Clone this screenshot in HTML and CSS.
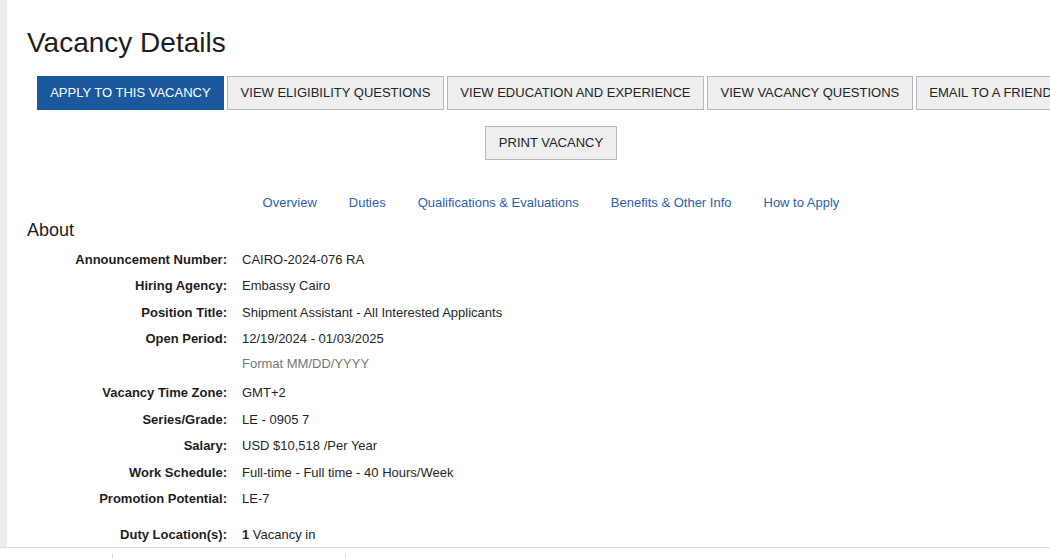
FILE: index.html
```html
<!DOCTYPE html>
<html lang="en">
<head>
<meta charset="utf-8">
<title>Vacancy Details</title>
<link rel="stylesheet" href="styles.css">
</head>
<body>
<div class="page">
  <main class="panel">
    <h1 class="title">Vacancy Details</h1>
    <div class="actions">
      <div class="action-row">
        <button class="btn btn-primary">APPLY TO THIS VACANCY</button>
        <button class="btn">VIEW ELIGIBILITY QUESTIONS</button>
        <button class="btn">VIEW EDUCATION AND EXPERIENCE</button>
        <button class="btn">VIEW VACANCY QUESTIONS</button>
        <button class="btn">EMAIL TO A FRIEND</button>
      </div>
      <div class="action-row">
        <button class="btn">PRINT VACANCY</button>
      </div>
    </div>
    <nav class="tabs">
      <a href="#overview">Overview</a>
      <a href="#duties">Duties</a>
      <a href="#qualifications">Qualifications &amp; Evaluations</a>
      <a href="#benefits">Benefits &amp; Other Info</a>
      <a href="#apply">How to Apply</a>
    </nav>
    <h2 class="section-title">About</h2>
    <dl class="details">
      <div class="row"><dt>Announcement Number:</dt><dd>CAIRO-2024-076 RA</dd></div>
      <div class="row"><dt>Hiring Agency:</dt><dd>Embassy Cairo</dd></div>
      <div class="row"><dt>Position Title:</dt><dd>Shipment Assistant - All Interested Applicants</dd></div>
      <div class="row"><dt>Open Period:</dt><dd>12/19/2024 - 01/03/2025<span class="hint">Format MM/DD/YYYY</span></dd></div>
      <div class="row"><dt>Vacancy Time Zone:</dt><dd>GMT+2</dd></div>
      <div class="row"><dt>Series/Grade:</dt><dd>LE - 0905 7</dd></div>
      <div class="row"><dt>Salary:</dt><dd>USD $10,518 /Per Year</dd></div>
      <div class="row"><dt>Work Schedule:</dt><dd>Full-time - Full time - 40 Hours/Week</dd></div>
      <div class="row"><dt>Promotion Potential:</dt><dd>LE-7</dd></div>
      <div class="row row-spaced"><dt>Duty Location(s):</dt><dd><b>1</b> Vacancy in</dd></div>
    </dl>
  </main>
  <div class="locations">
    <div class="cell cell-first"></div>
    <div class="cell cell-mid"></div>
    <div class="cell cell-last"></div>
  </div>
</div>
</body>
</html>
```

FILE: styles.css
```css
html, body {
  margin: 0;
  padding: 0;
  overflow: hidden;
  background: #ffffff;
}

body {
  font-family: "Liberation Sans", Arial, sans-serif;
  color: #212529;
  font-size: 13px;
}

.page {
  width: 1095px;
}

.panel {
  margin-left: 7px;
  width: 1088px;
  background: #ffffff;
  box-shadow: -7px 0 0 #ececec;
  display: flow-root;
}

.title {
  margin: 27px 0 0 20px;
  font-size: 28px;
  line-height: 32px;
  font-weight: normal;
  color: #1d1d1d;
}

.actions {
  margin-top: 17px;
  display: flex;
  flex-direction: column;
  gap: 16px;
}

.action-row {
  display: flex;
  justify-content: center;
  gap: 3px;
}

.btn {
  font-family: "Liberation Sans", Arial, sans-serif;
  font-size: 13px;
  line-height: 16px;
  padding: 8px 12.5px;
  border: 1px solid #b3b9c0;
  background: #eeeeee;
  color: #212529;
  border-radius: 0;
  white-space: nowrap;
  flex: none;
}

.btn-primary {
  background: #1a5a9c;
  border-color: #1a5a9c;
  color: #ffffff;
}

.tabs {
  margin-top: 33px;
  display: flex;
  justify-content: center;
  gap: 32px;
  line-height: 20px;
}

.tabs a {
  color: #2c62a6;
  text-decoration: none;
  font-size: 13px;
}

.section-title {
  margin: 6px 0 0 20px;
  font-size: 18px;
  line-height: 22px;
  font-weight: normal;
  color: #1d1d1d;
}

.details {
  margin: 5.5px 0 0 0;
  padding: 0;
}

.row {
  display: grid;
  grid-template-columns: 220px 1fr;
  column-gap: 15px;
  padding: 4px 0;
  line-height: 18.5px;
}

.row dt {
  text-align: right;
  font-weight: bold;
  color: #1d1d1d;
}

.row dd {
  margin: 0;
  color: #262626;
}

.hint {
  display: block;
  margin: 6.5px 0 2.5px 0;
  color: #777777;
}

.row-spaced {
  margin-top: 9.5px;
  padding-bottom: 2px;
}

.locations {
  border-top: 1px solid #dddddd;
  display: flex;
  padding-top: 6px;
  height: 20px;
}

.cell {
  height: 20px;
}

.cell-first {
  width: 112px;
}

.cell-mid {
  width: 232px;
  border-left: 1px solid #d4d4d4;
}

.cell-last {
  flex: 1;
  border-left: 1px solid #d4d4d4;
}
```
